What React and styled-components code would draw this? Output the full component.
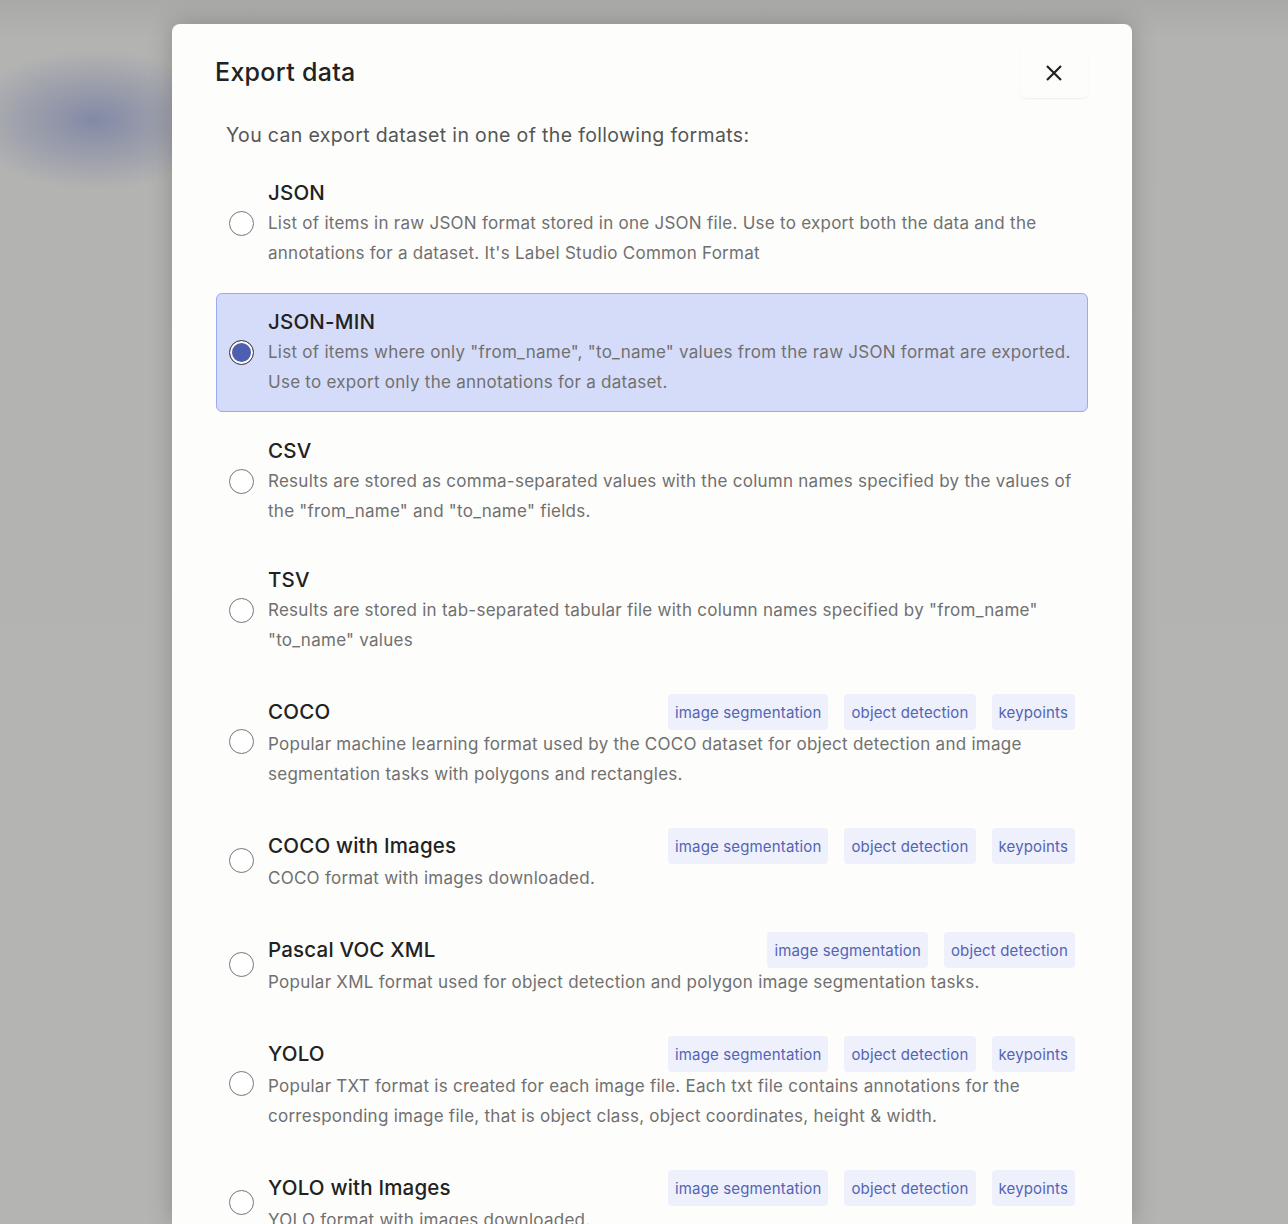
import React from "react";
import styled, { createGlobalStyle } from "styled-components";

const Global = createGlobalStyle`
  html, body {
    margin: 0;
    height: 1224px;
    overflow: hidden;
  }
  body {
    background:
      radial-gradient(ellipse 130px 70px at 95px 120px, rgba(110, 120, 160, 0.7), rgba(110, 120, 160, 0) 100%),
      linear-gradient(180deg, #a9a9a7 0px, #b3b3b1 40px, #b4b4b2 100%);
    font-family: Inter, "Noto Sans", sans-serif;
  }
`;

const Modal = styled.div`
  width: 960px;
  margin: 24px 0 0 172px;
  background: #fdfdfb;
  border-radius: 8px 8px 0 0;
  box-shadow: 0 0 24px rgba(0, 0, 0, 0.22);
  padding: 24px 44px 0 44px;
  box-sizing: border-box;
  height: 1200px;
`;

const Header = styled.div`
  display: flex;
  justify-content: space-between;
  align-items: center;
  height: 50px;
`;

const Title = styled.h2`
  margin: -2px 0 0 -1px;
  font-size: 25px;
  letter-spacing: 0.3px;
  font-weight: 500;
  color: #222;
`;

const CloseButton = styled.button`
  width: 68px;
  height: 50px;
  border: none;
  border-radius: 5px;
  background: #fdfdfb;
  box-shadow: 0 1px 2px rgba(0, 0, 0, 0.06);
  display: flex;
  align-items: center;
  justify-content: center;
  color: #222;
  cursor: pointer;
`;

const Subtitle = styled.p`
  margin: 22px 0 14px 10px;
  font-size: 19.5px;
  letter-spacing: 0.35px;
  line-height: 30px;
  color: #555;
`;

const List = styled.div`
  display: flex;
  flex-direction: column;
  gap: 10px;
`;

const Option = styled.label`
  display: flex;
  align-items: center;
  gap: 14px;
  padding: 13px 12px 14px 12px;
  border: 1px solid ${(p) => (p.$active ? "#9aaaf3" : "transparent")};
  border-radius: 6px;
  background: ${(p) => (p.$active ? "#d5dcf9" : "transparent")};
`;

const Radio = styled.span`
  flex: none;
  width: 25px;
  height: 25px;
  box-sizing: border-box;
  border-radius: 50%;
  border: 1px solid ${(p) => (p.$checked ? "#444" : "#777")};
  background: ${(p) => (p.$checked ? "#4d5fae" : "#fff")};
  box-shadow: ${(p) => (p.$checked ? "inset 0 0 0 2px #fff" : "none")};
`;

const Body = styled.div`
  flex: 1;
  min-width: 0;
`;

const TitleRow = styled.div`
  display: flex;
  align-items: center;
  justify-content: space-between;
  min-height: 30px;
`;

const Name = styled.div`
  font-size: 20.5px;
  letter-spacing: 0.2px;
  font-weight: 500;
  color: #222;
  line-height: 30px;
`;

const Tags = styled.div`
  display: flex;
  gap: 16px;
  margin-bottom: -1px;
`;

const Tag = styled.span`
  height: 36px;
  display: flex;
  align-items: center;
  padding: 0 7px;
  border-radius: 4px;
  background: #eef0fc;
  color: #5364b4;
  font-size: 15px;
  letter-spacing: 0.15px;
`;

const Desc = styled.div`
  font-size: 17px;
  letter-spacing: 0.26px;
  line-height: 30px;
  color: #707070;
`;

const tags3 = ["image segmentation", "object detection", "keypoints"];
const tags2 = ["image segmentation", "object detection"];

const formats = [
  {
    name: "JSON",
    desc: "List of items in raw JSON format stored in one JSON file. Use to export both the data and the annotations for a dataset. It's Label Studio Common Format",
  },
  {
    name: "JSON-MIN",
    active: true,
    desc: 'List of items where only "from_name", "to_name" values from the raw JSON format are exported. Use to export only the annotations for a dataset.',
  },
  {
    name: "CSV",
    desc: 'Results are stored as comma-separated values with the column names specified by the values of the "from_name" and "to_name" fields.',
  },
  {
    name: "TSV",
    desc: 'Results are stored in tab-separated tabular file with column names specified by "from_name" "to_name" values',
  },
  {
    name: "COCO",
    tags: tags3,
    desc: "Popular machine learning format used by the COCO dataset for object detection and image segmentation tasks with polygons and rectangles.",
  },
  { name: "COCO with Images", tags: tags3, desc: "COCO format with images downloaded." },
  {
    name: "Pascal VOC XML",
    tags: tags2,
    desc: "Popular XML format used for object detection and polygon image segmentation tasks.",
  },
  {
    name: "YOLO",
    tags: tags3,
    desc: "Popular TXT format is created for each image file. Each txt file contains annotations for the corresponding image file, that is object class, object coordinates, height & width.",
  },
  { name: "YOLO with Images", tags: tags3, desc: "YOLO format with images downloaded." },
];

export default function App() {
  return (
    <>
      <Global />
      <Modal>
        <Header>
          <Title>Export data</Title>
          <CloseButton aria-label="close">
            <svg width="18" height="18" viewBox="0 0 18 18" fill="none" stroke="currentColor" strokeWidth="2.2">
              <path d="M2 2l14 14M16 2L2 16" />
            </svg>
          </CloseButton>
        </Header>
        <Subtitle>You can export dataset in one of the following formats:</Subtitle>
        <List>
          {formats.map((f) => (
            <Option key={f.name} $active={f.active}>
              <Radio $checked={f.active} />
              <Body>
                <TitleRow>
                  <Name>{f.name}</Name>
                  {f.tags && (
                    <Tags>
                      {f.tags.map((t) => (
                        <Tag key={t}>{t}</Tag>
                      ))}
                    </Tags>
                  )}
                </TitleRow>
                <Desc>{f.desc}</Desc>
              </Body>
            </Option>
          ))}
        </List>
      </Modal>
    </>
  );
}
